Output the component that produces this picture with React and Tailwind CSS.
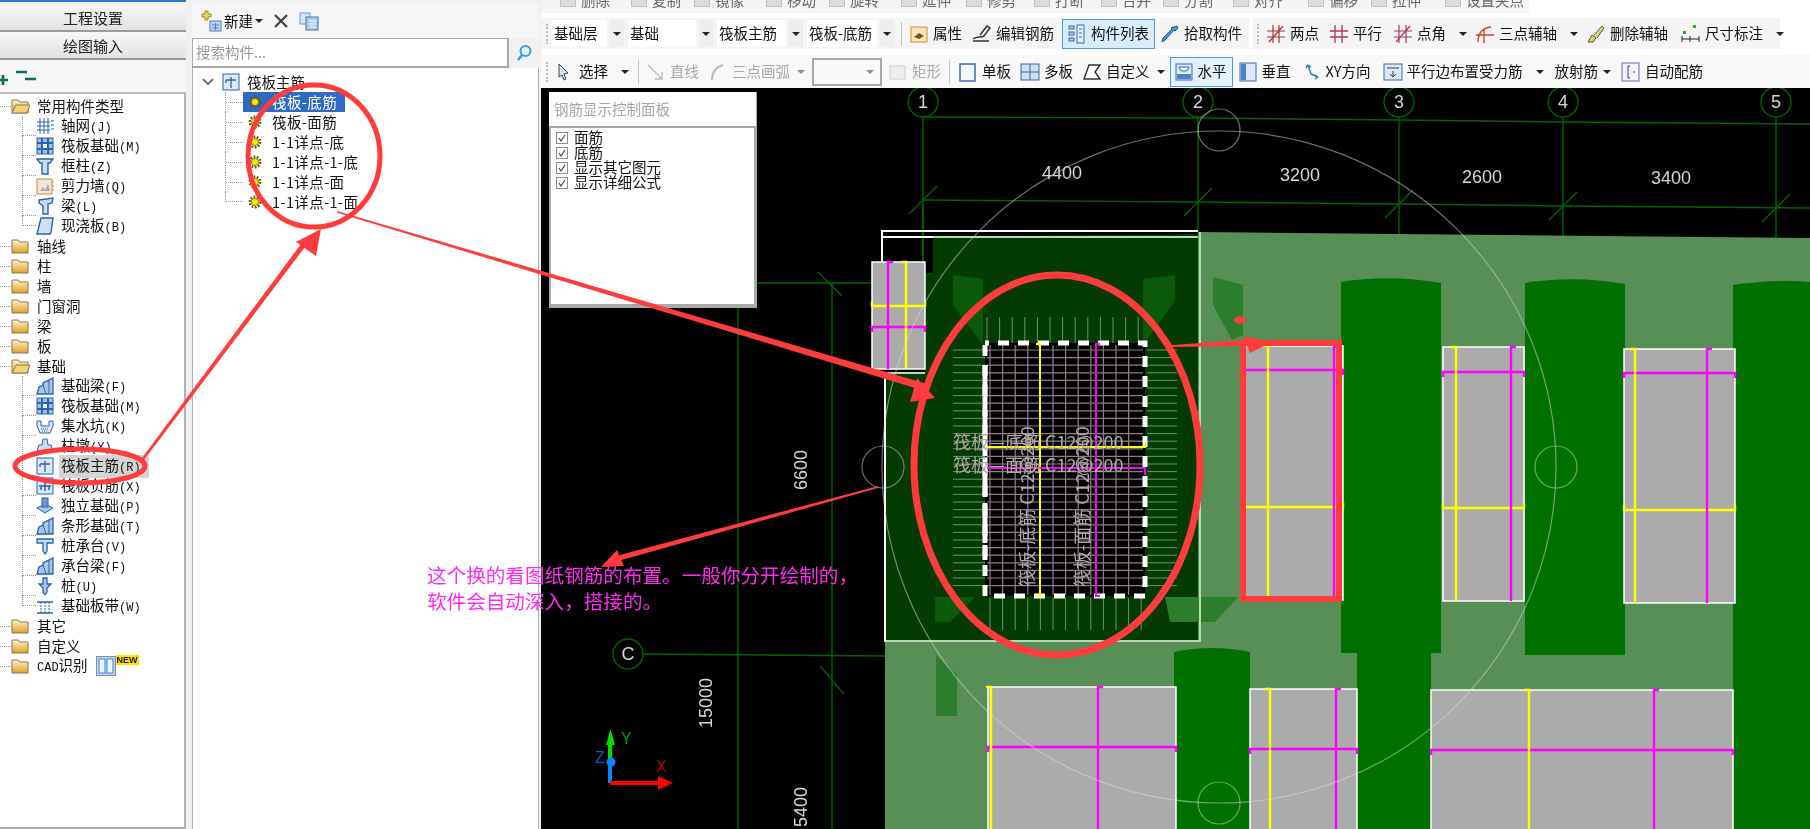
import React from 'react'

const commonTypes = [
  ['grid', '轴网', 'J'],
  ['raft', '筏板基础', 'M'],
  ['column', '框柱', 'Z'],
  ['wall', '剪力墙', 'Q'],
  ['beam', '梁', 'L'],
  ['slab', '现浇板', 'B'],
]

const foundationTypes = [
  ['fbeam', '基础梁', 'F'],
  ['raft', '筏板基础', 'M'],
  ['pit', '集水坑', 'K'],
  ['pier', '柱墩', 'Y'],
  ['rebar', '筏板主筋', 'R'],
  ['neg', '筏板负筋', 'X'],
  ['iso', '独立基础', 'P'],
  ['fbeam', '条形基础', 'T'],
  ['cap', '桩承台', 'V'],
  ['fbeam', '承台梁', 'F'],
  ['pile', '桩', 'U'],
  ['band', '基础板带', 'W'],
]

const raftItems = ['筏板-底筋', '筏板-面筋', '1-1详点-底', '1-1详点-1-底', '1-1详点-面', '1-1详点-1-面']

const checks = ['面筋', '底筋', '显示其它图元', '显示详细公式']

function Glyph({ name }) {
  const blue = '#2d62ad'
  const parts = {
    grid: <path d="M1 5h13M1 9h13M1 13h13M4 1v16M8 1v16M12 1v16M15 4h3M15 8h3M15 12h3" stroke={blue} fill="none" />,
    raft: <><rect x="1" y="1" width="16" height="16" fill="#9fc0e8" stroke={blue} /><path d="M1 6h16M1 12h16M6 1v16M12 1v16" stroke={blue} strokeWidth="2" fill="none" /><rect x="7" y="7" width="4" height="4" fill="#fff" /></>,
    column: <path d="M1 2h16l-3 4h-2v11H6V6H4z" fill="#c8dcf2" stroke={blue} strokeWidth="1.4" />,
    wall: <><rect x="1" y="2" width="15" height="15" fill="#f3e6d8" stroke="#c98a4a" /><path d="M4 14l3-4 2 3 3-6 2 7z" fill="#aaa" /><path d="M16 5h2M16 9h2M16 13h2" stroke="#e07a20" /></>,
    beam: <path d="M3 3l14-2-1 5-4 1v10H7V9L3 6z" fill="#c8dcf2" stroke={blue} strokeWidth="1.4" />,
    slab: <path d="M5 1h12l-2 14-1 2H1z" fill="#cfe0f5" stroke={blue} strokeWidth="1.4" />,
    fbeam: <><path d="M1 17l2-7 4-2V6l10-5v16z" fill="#a9c6ea" stroke={blue} strokeWidth="1.3" /><path d="M7 8l3 9M13 3v14" stroke={blue} /></>,
    pit: <><path d="M1 4h4v5h8V4h4v5l-3 7H4L1 9z" fill="#dbe8f7" stroke={blue} /><path d="M5 12h8M6 14h6" stroke={blue} strokeDasharray="1 1" /></>,
    pier: <path d="M7 2h4l1 6h3l2 6H1l2-6h3z" fill="#c8dcf2" stroke={blue} />,
    rebar: <><rect x="1" y="1" width="16" height="16" fill="#dbe8fa" stroke={blue} /><path d="M9 4v11M4 7h10M4 7v3" stroke={blue} strokeWidth="1.3" fill="none" /></>,
    neg: <><rect x="1" y="1" width="16" height="16" fill="#dbe8fa" stroke={blue} /><path d="M3 9h12M5 9v4M13 9v4M9 4v10" stroke={blue} strokeWidth="1.5" fill="none" /></>,
    iso: <><path d="M1 11l8-4 8 4-8 5z" fill="#a9c6ea" stroke={blue} /><rect x="6" y="1" width="6" height="9" fill="#6f97cc" stroke={blue} /></>,
    cap: <path d="M1 2h16v4h-6v8l-2 3-2-3V6H1z" fill="#c8dcf2" stroke={blue} strokeWidth="1.3" />,
    pile: <path d="M7 1h4v6h4l-4 4v4l-2 3-2-3v-4L3 7h4z" fill="#a9c6ea" stroke={blue} strokeWidth="1.3" />,
    band: <><path d="M1 5h16M1 16h16" stroke={blue} strokeWidth="1.5" /><path d="M5 5v11M9 5v11M13 5v11" stroke={blue} strokeDasharray="2 1" /></>,
  }
  return <svg viewBox="0 0 18 18" className="w-[18px] h-[18px] shrink-0">{parts[name]}</svg>
}

function Folder({ open }) {
  return (
    <svg viewBox="0 0 20 16" className="w-5 h-4 shrink-0">
      <defs>
        <linearGradient id="folderFill" x1="0" y1="0" x2="0" y2="1">
          <stop offset="0" stopColor="#fff4c8" />
          <stop offset="1" stopColor="#dda02a" />
        </linearGradient>
      </defs>
      <path d="M1 2h6l2 2h8v11H1z" fill="url(#folderFill)" stroke="#8a7a55" />
      {open && <path d="M1 15l4-8h14l-3 8z" fill="#f3d27a" stroke="#8a7a55" />}
    </svg>
  )
}

function Gear() {
  return (
    <svg viewBox="0 0 14 14" className="w-[14px] h-[14px] shrink-0">
      <circle cx="7" cy="7" r="5.2" fill="none" stroke="#5f5a10" strokeWidth="2.4" strokeDasharray="1.8 1.4" />
      <circle cx="7" cy="7" r="3.6" fill="#f7e600" stroke="#5f5a10" strokeWidth="0.7" />
    </svg>
  )
}

function Caret({ className = '' }) {
  return <span className={`w-0 h-0 border-x-[4px] border-x-transparent border-t-[4px] border-t-[#222] shrink-0 ${className}`} />
}

function Grip() {
  return <span className="w-[3px] h-5 shrink-0 border-l-2 border-dotted border-[#bbb]" />
}

function Sep({ className = '' }) {
  return <span className={`w-px h-6 bg-[#c4c4c4] shrink-0 ${className}`} />
}

function ToolIcon({ name }) {
  const blue = '#3a68b0'
  const shapes = {
    prop: <><rect x="2" y="3" width="16" height="15" fill="#fbe3b8" stroke="#d98a2b" /><path d="M5 13l5-4 5 3-5 3z" fill="#6b5a20" /></>,
    pen: <path d="M1 15c4-3 7-1 11-3l6-8-3-2-7 9M1 17h16" stroke="#333" strokeWidth="1.5" fill="none" />,
    list: <><rect x="2" y="2" width="5" height="3" fill="#bcd" stroke={blue} /><rect x="2" y="8" width="5" height="3" fill="#bcd" stroke={blue} /><rect x="2" y="14" width="5" height="3" fill="#bcd" stroke={blue} /><rect x="10" y="1" width="7" height="18" fill="#e7effa" stroke={blue} /><path d="M12 5h3M12 9h3M12 13h3" stroke={blue} /></>,
    pick: <path d="M17 2l1 2-3 3-1-1-9 10-3 2 1-4 9-9-1-1z" fill="#4f93de" stroke="#1e4f90" />,
    twopoint: <path d="M1 7h18M1 13h18M7 1v18M13 1v18M3 18L17 2" stroke="#a33" fill="none" strokeWidth="1.2" />,
    parallel: <path d="M1 7h18M1 13h18M6 1v18M13 1v18" stroke="#b2345a" fill="none" strokeWidth="1.3" />,
    angle: <path d="M1 7h18M1 13h18M6 1v18M13 1v18M3 18L17 2" stroke="#b2345a" fill="none" strokeWidth="1.2" />,
    arc: <path d="M3 18C3 9 8 4 16 3M1 11h18M9 5v14" stroke="#c43" fill="none" strokeWidth="1.4" />,
    erase: <path d="M2 18l4-7 4 3-3 4zM8 11l8-9 2 2-7 10" fill="#e5d36a" stroke="#456" />,
    dim: <><path d="M1 15h17M1 12v6M9 12v6M18 12v6" stroke="#222" /><rect x="12" y="1" width="3" height="3" fill="#2aa82a" /><rect x="2" y="7" width="3" height="3" fill="#2aa82a" /></>,
    select: <path d="M4 2l9 9-4 1 2 5-2 1-2-5-3 2z" fill="#dbe8fa" stroke="#345" />,
    line: <path d="M2 3l14 14M16 10v7H9" stroke="#bbb" fill="none" strokeWidth="1.4" />,
    arc3: <path d="M4 18C4 10 8 5 15 3" stroke="#bbb" fill="none" strokeWidth="2" />,
    rect: <rect x="2" y="4" width="15" height="13" fill="#eee" stroke="#ccc" />,
    single: <rect x="2" y="2" width="15" height="17" fill="#f2f6fd" stroke={blue} strokeWidth="1.5" />,
    multi: <><rect x="1" y="2" width="18" height="16" fill="#cfdff3" stroke={blue} /><path d="M10 2v16M1 10h18" stroke={blue} /></>,
    custom: <path d="M2 17L7 3h11l-5 7 5 7z" fill="#fff" stroke="#333" strokeWidth="1.4" />,
    horizontal: <><rect x="2" y="2" width="16" height="16" fill="#dce8f8" stroke={blue} /><rect x="3" y="12" width="14" height="5" fill="#4d83c8" /><path d="M5 5h10l-2 4H7z" fill="#fff" stroke={blue} /></>,
    vertical: <><rect x="2" y="1" width="16" height="18" fill="#dce8f8" stroke={blue} /><rect x="3" y="2" width="5" height="16" fill="#4d83c8" /></>,
    xy: <path d="M6 3l3 9 7 3M6 3L4 6M6 3l3 2M16 15l-3-2M16 15l-3 2" stroke="#2d6fd0" fill="none" strokeWidth="1.5" />,
    edge: <><rect x="1" y="2" width="18" height="16" fill="#dce8f8" stroke={blue} /><path d="M4 6h12M10 9v6M7 12l3 3 3-3" stroke="#245" fill="none" /></>,
    auto: <><rect x="1" y="1" width="17" height="18" fill="#f4f0ff" stroke="#6a6ac0" /><path d="M9 4H7v12h2M12 10h2" stroke="#446" fill="none" /></>,
  }
  return <svg viewBox="0 0 20 20" className="w-5 h-5 shrink-0">{shapes[name]}</svg>
}

function Tool({ icon, label, caret, caretClass = 'ml-[9px]', className = '', muted }) {
  return (
    <div className={`flex items-center gap-1 shrink-0 ${className}`}>
      <ToolIcon name={icon} />
      <span className={muted ? 'text-[#a8a8a8]' : 'text-[#111]'}>{label}</span>
      {caret && <Caret className={caretClass} />}
    </div>
  )
}

function Combo({ label, className }) {
  return (
    <div className={`flex items-center h-[27px] shrink-0 ${className}`}>
      <span className="flex-1 h-full bg-white flex items-center px-[2px]">{label}</span>
      <span className="w-[14px] h-full ml-[3px] bg-[#eee] flex items-center justify-center"><Caret /></span>
    </div>
  )
}

function TreeIconRow({ icon, label, hotkey, last, active }) {
  return (
    <div className="flex items-center h-5">
      <span className={`ml-[22px] w-[14px] border-l border-dotted border-[#999] flex items-end ${last ? 'h-[10px] self-start' : 'h-5 items-center'}`}>
        <span className="w-full border-t border-dotted border-[#999]" />
      </span>
      <Glyph name={icon} />
      <span className={`ml-[5px] pl-[2px] leading-5 whitespace-nowrap ${active ? 'bg-[#d4d4d4] pr-2' : ''}`}>
        {label}
        <span className="font-['Liberation_Mono',monospace] text-[12px]">({hotkey})</span>
      </span>
    </div>
  )
}

function FolderRow({ label, open, children }) {
  return (
    <div className="flex items-center h-5">
      <span className="w-[11px] border-t border-dotted border-[#999]" />
      <Folder open={open} />
      <span className="ml-[6px] leading-5 whitespace-nowrap">{label}</span>
      {children}
    </div>
  )
}

function LeftPanel() {
  return (
    <aside className="w-[186px] shrink-0 flex flex-col bg-[#f0f0f0]">
      <div className="h-[2px] bg-[#2f6fd6]" />
      <button className="h-[27px] mt-[3px] bg-gradient-to-b from-[#f7f7f7] to-[#e2e2e2] border-b-2 border-[#9c9c9c] text-[#222] text-[15px]">工程设置</button>
      <button className="h-[28px] bg-gradient-to-b from-[#f7f7f7] to-[#e2e2e2] border-b-2 border-[#9c9c9c] text-[#222] text-[15px]">绘图输入</button>
      <div className="h-[34px] flex items-end pb-[5px] bg-[#f6f6f6] border-b-2 border-[#bbb]">
        <svg viewBox="0 0 40 20" className="w-10 h-5">
          <path d="M-3 13h11M3 8v10" stroke="#0e6b63" strokeWidth="2.6" />
          <path d="M16 5h11M25 12h11" stroke="#0e6b63" strokeWidth="2.4" />
        </svg>
      </div>
      <div className="flex-1 bg-white border-r-2 border-b-2 border-[#aeb2b6] pt-[2px] overflow-hidden">
        <FolderRow label="常用构件类型" open />
        {commonTypes.map(([icon, label, key], i) => (
          <TreeIconRow key={label} icon={icon} label={label} hotkey={key} last={i === commonTypes.length - 1} />
        ))}
        <FolderRow label="轴线" />
        <FolderRow label="柱" />
        <FolderRow label="墙" />
        <FolderRow label="门窗洞" />
        <FolderRow label="梁" />
        <FolderRow label="板" />
        <FolderRow label="基础" open />
        {foundationTypes.map(([icon, label, key], i) => (
          <TreeIconRow key={label} icon={icon} label={label} hotkey={key} active={key === 'R'} last={i === foundationTypes.length - 1} />
        ))}
        <FolderRow label="其它" />
        <FolderRow label="自定义" />
        <FolderRow label={<><span className="font-['Liberation_Mono',monospace] text-[12px]">CAD</span>识别</>}>
          <svg viewBox="0 0 20 20" className="w-5 h-5 ml-2 shrink-0">
            <rect x="0.5" y="0.5" width="19" height="19" fill="#b7d9f7" stroke="#8a8f96" />
            <rect x="3" y="3" width="6" height="14" fill="#e8f3fd" stroke="#3f87d8" />
            <rect x="11" y="3" width="6" height="14" fill="#e8f3fd" stroke="#3f87d8" />
          </svg>
          <span className="self-start -mt-[1px] px-[1px] bg-[#ffe000] text-[9px] leading-[10px] font-bold font-['Liberation_Sans',sans-serif] text-[#222]">NEW</span>
        </FolderRow>
      </div>
    </aside>
  )
}

function MiddlePanel() {
  return (
    <section className="w-[347px] shrink-0 ml-[6px] flex flex-col">
      <div className="h-[36px] mt-[3px] pl-2 flex items-center bg-[#f6f6f6]">
        <svg viewBox="0 0 22 22" className="w-[22px] h-[22px]">
          <path d="M5 1h3v3h3v3H8v3H5V7H2V4h3z" fill="#f2d64b" stroke="#9a8a30" />
          <rect x="10" y="11" width="11" height="10" fill="#bcd5f0" stroke="#4f7fb8" />
          <path d="M12 15h7M12 18h7M15.5 13v7" stroke="#4f7fb8" />
        </svg>
        <span className="ml-[2px] text-[#111]">新建</span>
        <Caret className="ml-[2px]" />
        <svg viewBox="0 0 16 16" className="w-4 h-4 ml-[10px]">
          <path d="M2 2l12 12M14 2L2 14" stroke="#444" strokeWidth="2.2" />
        </svg>
        <svg viewBox="0 0 20 20" className="w-5 h-5 ml-[10px]">
          <rect x="1" y="2" width="10" height="11" fill="#d6e5f7" stroke="#6d9bd0" />
          <rect x="7" y="6" width="12" height="13" fill="#aecbee" stroke="#3f73b4" />
          <path d="M10 10h7M10 13h7M10 16h7" stroke="#fff" />
        </svg>
      </div>
      <div className="h-[30px] flex bg-[#f1f1f1] -mt-[1px]">
        <div className="flex-1 bg-white border-t border-[#8f8f8f] border-l border-r-2 border-b-2 border-[#a8a8a8] flex items-center px-[3px] text-[#9a9a9a] leading-none">搜索构件...</div>
        <div className="w-[30px] flex items-center justify-center">
          <svg viewBox="0 0 18 18" className="w-[18px] h-[18px]">
            <circle cx="10.5" cy="7" r="5" fill="#e4f2fd" stroke="#3a9be8" strokeWidth="2" />
            <path d="M7 11l-4 5" stroke="#3a9be8" strokeWidth="2.6" />
          </svg>
        </div>
      </div>
      <div className="flex-1 bg-white border-x border-[#aeb2b6] pl-[8px] pt-[4px]">
        <div className="flex items-center h-5">
          <svg viewBox="0 0 12 8" className="w-3 h-2 ml-[1px] mr-[8px]"><path d="M1 1l5 5 5-5" stroke="#555" strokeWidth="1.6" fill="none" /></svg>
          <Glyph name="rebar" />
          <span className="ml-[7px] leading-5">筏板主筋</span>
        </div>
        {raftItems.map((label, i) => (
          <div key={label} className="flex items-center h-5">
            <span className={`ml-[24px] w-[18px] border-l border-dotted border-[#999] flex ${i === raftItems.length - 1 ? 'h-[10px] self-start items-end' : 'h-5 items-center'}`}>
              <span className="w-full border-t border-dotted border-[#999]" />
            </span>
            <div className={`flex items-center h-5 pl-[5px] pr-[8px] ${i === 0 ? 'bg-[#316ac5] text-white' : 'text-[#111]'}`}>
              <Gear />
              <span className="ml-[10px] leading-5 whitespace-nowrap tracking-[0.4px]">{label}</span>
            </div>
          </div>
        ))}
      </div>
    </section>
  )
}

function ClippedRow() {
  const items = [
    ['删除', 'ml-[19px]'], ['复制', 'ml-[21px]'], ['镜像', 'ml-[13px]'], ['移动', 'ml-[22px]'], ['旋转', 'ml-[13px]'], ['延伸', 'ml-[22px]'],
    ['修剪', 'ml-[15px]'], ['打断', 'ml-[18px]'], ['合并', 'ml-[17px]'], ['分割', 'ml-[12px]'], ['对齐', 'ml-[20px]'], ['偏移', 'ml-[25px]'], ['拉伸', 'ml-[13px]'], ['设置夹点', 'ml-[24px]'],
  ]
  return (
    <div className="h-[13px] w-[988px] overflow-hidden bg-[#f4f4f4] flex items-start text-[#666]">
      {items.map(([label, cls]) => (
        <div key={label} className={`${cls} flex items-start gap-[5px] shrink-0`}>
          <span className="w-4 h-[7px] bg-[#dcdcdc] border-b border-x border-[#c2c2c2] shrink-0" />
          <span className="-mt-[10px] leading-5">{label}</span>
        </div>
      ))}
    </div>
  )
}

function FirstToolbar() {
  return (
    <div className="h-[31px] mt-[5px] flex items-stretch">
      <div className="w-[708px] bg-[#f5f5f5] flex items-center pl-[5px]">
        <Grip />
        <Combo label="基础层" className="w-[72px] ml-[3px]" />
        <Combo label="基础" className="w-[85px] ml-[4px]" />
        <Combo label="筏板主筋" className="w-[86px] ml-[4px]" />
        <Combo label="筏板-底筋" className="w-[87px] ml-[4px]" />
        <Sep className="ml-[7px]" />
        <Tool icon="prop" label="属性" className="ml-[7px]" />
        <Tool icon="pen" label="编辑钢筋" className="ml-[10px]" />
        <Tool icon="list" label="构件列表" className="ml-[8px] w-[93px] h-[30px] pl-[4px] bg-[#d9ecfb] border border-[#4a9be0]" />
        <Tool icon="pick" label="拾取构件" className="ml-[5px]" />
      </div>
      <div className="w-[527px] ml-[4px] bg-[#f5f5f5] flex items-center pl-[4px]">
        <Grip />
        <Tool icon="twopoint" label="两点" className="ml-[6px]" />
        <Tool icon="parallel" label="平行" className="ml-[10px]" />
        <Tool icon="angle" label="点角" caret className="ml-[11px]" />
        <Tool icon="arc" label="三点辅轴" caret className="ml-[8px]" />
        <Tool icon="erase" label="删除辅轴" className="ml-[8px]" />
        <Tool icon="dim" label="尺寸标注" caret className="ml-[13px]" />
      </div>
    </div>
  )
}

function SecondToolbar() {
  return (
    <div className="h-[33px] mt-[6px] bg-[#f8f8f8] flex items-center pl-[5px]">
      <Grip />
      <Tool icon="select" label="选择" caret className="ml-[6px]" />
      <Sep className="ml-[9px]" />
      <Tool icon="line" label="直线" muted className="ml-[7px]" />
      <Tool icon="arc3" label="三点画弧" muted className="ml-[9px]" />
      <Caret className="ml-[7px] opacity-50" />
      <div className="w-[70px] h-[28px] ml-[7px] bg-[#fafafa] border-2 border-[#a8a8a8] flex items-center justify-end pr-[6px] shrink-0"><Caret className="opacity-50" /></div>
      <Tool icon="rect" label="矩形" muted className="ml-[6px]" />
      <Sep className="ml-[8px]" />
      <Tool icon="single" label="单板" className="ml-[8px]" />
      <Tool icon="multi" label="多板" className="ml-[9px]" />
      <Tool icon="custom" label="自定义" caret caretClass="ml-[3px]" className="ml-[9px]" />
      <Tool icon="horizontal" label="水平" className="ml-[5px] w-[63px] h-[30px] pl-[3px] bg-[#e3f1fc] border border-[#4a9be0]" />
      <Tool icon="vertical" label="垂直" className="ml-[5px]" />
      <Tool icon="xy" label="XY方向" className="ml-[11px]" />
      <Tool icon="edge" label="平行边布置受力筋" caret className="ml-[12px]" />
      <span className="ml-[11px] text-[#111] shrink-0">放射筋</span>
      <Caret className="ml-[5px]" />
      <Tool icon="auto" label="自动配筋" className="ml-[10px]" />
    </div>
  )
}

const axes = [[923, '1', 117, 200], [1198, '2', 118, 202], [1399, '3', 120, 204], [1563, '4', 122, 206], [1776, '5', 124, 208]]

const slabs = [
  { x: 872, y: 262, w: 53, h: 107, yv: 906, mv: 888, mh: 327, yh: 306 },
  { x: 1245, y: 346, w: 98, h: 254, yv: 1268, mv: 1334, mh: 370, yh: 507 },
  { x: 1443, y: 347, w: 81, h: 254, yv: 1456, mv: 1511, mh: 372, yh: 508 },
  { x: 1624, y: 349, w: 111, h: 254, yv: 1635, mv: 1707, mh: 373, yh: 510 },
  { x: 988, y: 687, w: 188, h: 150, yv: 991, mv: 1098, mh: 747 },
  { x: 1250, y: 689, w: 107, h: 150, yv: 1270, mv: 1336, mh: 749 },
  { x: 1431, y: 690, w: 302, h: 150, yv: 1529, mv: 1654, mh: 750 },
]

const range = (from, to, step) => {
  const out = []
  for (let v = from; v <= to; v += step) out.push(v)
  return out
}

function CadDrawing() {
  const textCls = "font-['Liberation_Sans',sans-serif]"
  return (
    <svg viewBox="541 88 1269 741" className="w-full h-full block">
      <rect x="541" y="88" width="1269" height="741" fill="#000" />
      <g stroke="#006400" strokeWidth="1.4" fill="none">
        {axes.map(([x, , y1, y2]) => (
          <g key={x}>
            <line x1={x} y1="117" x2={x} y2="262" />
            <path d={`M${x - 14} ${y2 + 14}L${x + 14} ${y2 - 14}`} />
          </g>
        ))}
        <path d="M923 117L1198 118L1399 120L1563 122L1810 124" />
        <path d="M923 200L1198 202L1399 204L1563 206L1810 208" />
        <path d="M757 283H872M738 308V829M832 283V829M643 654L885 656" />
        <path d="M818 272L842 296M820 666L844 694M923 204L923 300" />
        {axes.map(([x, label]) => (
          <circle key={label} cx={x} cy="102" r="15" />
        ))}
        <circle cx="628" cy="654" r="15" />
      </g>

      <polygon points="1198,232 1810,238 1810,829 885,829 885,641 1198,641" fill="#578f57" />
      <polygon points="933,237 1198,234 1198,640 885,640 885,373 925,373 925,273 933,273" fill="#033b03" />

      <polygon points="953,275 983,279 983,345 953,305" fill="#0a5a0a" />
      <polygon points="1143,279 1175,275 1175,301 1143,345" fill="#0a5a0a" />
      <polygon points="935,597 975,597 950,622 935,622" fill="#0a5a0a" />
      <polygon points="1165,597 1238,597 1215,622 1170,622" fill="#2c7d2c" />
      <polygon points="1213,277 1243,285 1243,335 1232,340 1213,305" fill="#2c7d2c" />
      <polygon points="936,655 957,675 957,716 936,716" fill="#2c7d2c" />

      <g fill="#007000">
        <path d="M1341 282Q1391 274 1441 283V653H1341Z" />
        <path d="M1525 283Q1575 275 1625 284V655H1525Z" />
        <path d="M1733 285Q1775 279 1810 282V655H1733Z" />
        <path d="M1174 652Q1212 644 1250 652V829H1174Z" />
        <rect x="1357" y="653" width="74" height="176" />
        <rect x="1733" y="655" width="77" height="174" />
      </g>

      <g fill="none" stroke="#fff" strokeWidth="2">
        <path d="M882 262V231H1198M882 237H933" />
      </g>
      <path d="M933 237H1198M1200 232V641H885V373H925" fill="none" stroke="#b9d9b9" strokeWidth="2" />
      <path d="M885 373V641" fill="none" stroke="#fff" strokeWidth="2" />

      {slabs.map((s) => (
        <g key={s.x}>
          <rect x={s.x} y={s.y} width={s.w} height={s.h} fill="#ababab" stroke="#fff" strokeWidth="1.5" />
          {s.yh && <path d={`M${s.x} ${s.yh - 5}V${s.yh}H${s.x + s.w}V${s.yh - 5}`} fill="none" stroke="#ffff00" strokeWidth="2.4" />}
          <path d={`M${s.x} ${s.mh + 5}V${s.mh}H${s.x + s.w}V${s.mh + 5}`} fill="none" stroke="#ff00ff" strokeWidth="2.4" />
          <path d={`M${s.yv - 5} ${s.y}H${s.yv}V${s.y + s.h}`} fill="none" stroke="#ffff00" strokeWidth="2.4" />
          <path d={`M${s.mv + 5} ${s.y}H${s.mv}V${s.y + s.h}`} fill="none" stroke="#ff00ff" strokeWidth="2.4" />
        </g>
      ))}

      <rect x="985" y="343" width="160" height="253" fill="#000" />
      <g stroke="#8e8080" strokeWidth="1.2">
        {range(990, 1140, 12.6).map((x) => <line key={x} x1={x} y1="345" x2={x} y2="595" />)}
        {range(350, 592, 7.6).map((y) => <line key={y} x1="987" y1={y} x2="1143" y2={y} />)}
      </g>
      <g stroke="#6a946a" strokeWidth="1">
        {range(987, 1140, 12.6).map((x) => (
          <g key={x}>
            <line x1={x} y1="317" x2={x} y2="343" />
            <line x1={x + 3} y1="598" x2={x + 3} y2="630" />
          </g>
        ))}
        {range(350, 592, 7.6).map((y) => (
          <g key={y}>
            <line x1="953" y1={y} x2="985" y2={y} />
            <line x1="1147" y1={y} x2="1177" y2={y} />
          </g>
        ))}
      </g>
      <path d="M985 345V596H1145V343H985" fill="none" stroke="#fff" strokeWidth="5" strokeDasharray="11 9" />
      <path d="M985 365V560" fill="none" stroke="#fff" strokeWidth="5" strokeDasharray="40 6" />
      <path d="M1036 344H1040V596H1036" fill="none" stroke="#ffff00" strokeWidth="2" />
      <path d="M1100 344H1096V596H1100" fill="none" stroke="#ff00ff" strokeWidth="2" />
      <path d="M987 447H1145V442" fill="none" stroke="#ffff00" strokeWidth="2" />
      <path d="M987 468H1145V475" fill="none" stroke="#ff00ff" strokeWidth="2" />

      <g fill="#b0a8a8" fontSize="18" className={textCls}>
        <text x="953" y="449" className="font-['Noto_Sans_CJK_SC',sans-serif]">筏板—底筋 C12@200</text>
        <text x="953" y="472" className="font-['Noto_Sans_CJK_SC',sans-serif]">筏板—面筋 C12@200</text>
        <text transform="translate(1034 587) rotate(-90)" className="font-['Noto_Sans_CJK_SC',sans-serif]">筏板-底筋 C12@200</text>
        <text transform="translate(1089 587) rotate(-90)" className="font-['Noto_Sans_CJK_SC',sans-serif]">筏板-面筋 C12@200</text>
      </g>

      <g fill="#d6d6d6" fontSize="18" textAnchor="middle" className={textCls}>
        {axes.map(([x, label]) => <text key={label} x={x} y="108">{label}</text>)}
        <text x="628" y="660">C</text>
        <text x="1062" y="179">4400</text>
        <text x="1300" y="181">3200</text>
        <text x="1482" y="183">2600</text>
        <text x="1671" y="184">3400</text>
        <text transform="translate(807 470) rotate(-90)">6600</text>
        <text transform="translate(712 703) rotate(-90)">15000</text>
        <text transform="translate(807 807) rotate(-90)">5400</text>
      </g>

      <g fill="none" stroke="#dcdcdc" strokeOpacity="0.5" strokeWidth="1.2">
        <ellipse cx="1219" cy="467" rx="337" ry="336" />
        <circle cx="1219" cy="130" r="21" />
        <circle cx="1556" cy="467" r="21" />
        <circle cx="1219" cy="803" r="21" />
        <circle cx="883" cy="467" r="21" />
      </g>

      <path d="M610 783V745" stroke="#00e000" strokeWidth="4" />
      <path d="M610 783V762" stroke="#0a84ff" strokeWidth="4" />
      <circle cx="611" cy="762" r="4.5" fill="#0a84ff" />
      <path d="M606 745L610.5 729L615 745Z" fill="#00e000" />
      <path d="M610 783H660" stroke="#ff0000" strokeWidth="4" />
      <path d="M658 776L673 783L658 790Z" fill="#ff0000" />
      <g fontSize="16" className={textCls}>
        <text x="621" y="744" fill="#00a000">Y</text>
        <text x="595" y="763" fill="#0a5ac8">Z</text>
        <text x="656" y="772" fill="#c00000">X</text>
      </g>
    </svg>
  )
}

function Annotations() {
  const red = '#ff3b3b'
  return (
    <svg viewBox="0 0 1810 829" className="absolute inset-0 w-[1810px] h-[829px] pointer-events-none">
      <ellipse cx="1057" cy="465" rx="143" ry="190" fill="none" stroke={red} strokeWidth="7" />
      <ellipse cx="314" cy="156" rx="66" ry="71" fill="none" stroke={red} strokeWidth="5" />
      <ellipse cx="80" cy="466" rx="65" ry="17" fill="none" stroke={red} strokeWidth="5" />
      <rect x="1243" y="343" width="96" height="256" fill="none" stroke={red} strokeWidth="6" />
      <polygon points="142,458 144,460 305,247 301,244" fill={red} />
      <polygon points="296,242 321,229 316,256 306,249" fill={red} />
      <polygon points="337,211 338,213 925,391 927,384" fill={red} />
      <polygon points="917,378 935,398 910,402" fill={red} />
      <polygon points="1172,345 1172,347 1245,346 1245,340" fill={red} />
      <polygon points="1243,336 1272,342 1250,353" fill={red} />
      <polygon points="878,486 878,488 618,561 620,555" fill={red} />
      <polygon points="617,550 601,567 624,566" fill={red} />
      <ellipse cx="1240" cy="320" rx="6" ry="3.5" fill={red} />
    </svg>
  )
}

export default function App() {
  return (
    <div className="relative w-[1810px] h-[829px] overflow-hidden bg-[#f0f0f0] flex text-[14.5px] leading-none text-[#111] blur-[0.35px] font-['Noto_Sans_CJK_SC',sans-serif]">
      <LeftPanel />
      <MiddlePanel />
      <main className="w-[1269px] ml-[2px] flex flex-col bg-white">
        <ClippedRow />
        <FirstToolbar />
        <SecondToolbar />
        <div className="relative flex-1">
          <CadDrawing />
          <div className="absolute left-[8px] top-[4px] w-[208px] h-[216px] bg-white flex flex-col border-b-2 border-r border-[#aaa]">
            <div className="h-[34px] pl-[5px] flex items-center text-[#a6a6a6]">钢筋显示控制面板</div>
            <div className="flex-1 border-2 border-[#a8a8a8] pt-[2px] pl-[5px]">
              {checks.map((label) => (
                <div key={label} className="flex items-center h-[15px]">
                  <span className="w-[12px] h-[12px] border border-[#8e8e8e] flex items-center justify-center shrink-0">
                    <svg viewBox="0 0 10 10" className="w-[10px] h-[10px]"><path d="M2 5l2 3 4-6" stroke="#444" strokeWidth="1.2" fill="none" /></svg>
                  </span>
                  <span className="ml-[6px] whitespace-nowrap">{label}</span>
                </div>
              ))}
            </div>
          </div>
        </div>
      </main>
      <Annotations />
      <div className="absolute left-[427px] top-[562px] text-[19.6px] leading-[26px] text-[#ff2bf0] whitespace-nowrap">
        <p>这个换的看图纸钢筋的布置。一般你分开绘制的，</p>
        <p>软件会自动深入，搭接的。</p>
      </div>
    </div>
  )
}
